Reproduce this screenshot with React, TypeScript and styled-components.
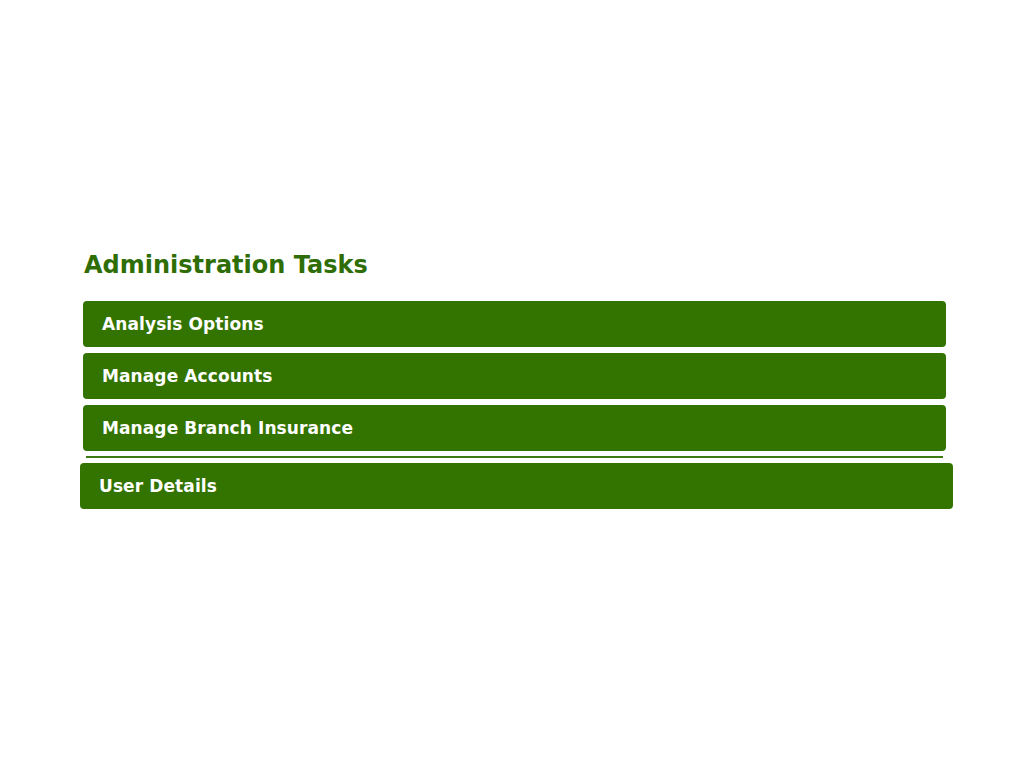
import { FC } from 'react';
import styled, { createGlobalStyle } from 'styled-components';

const GlobalStyle = createGlobalStyle`
  html, body {
    margin: 0;
    padding: 0;
    background: #ffffff;
    font-family: Verdana, "DejaVu Sans", sans-serif;
  }
`;

const Page = styled.div`
  padding: 251px 78px 0 83px;
  width: 863px;
`;

const Title = styled.h2`
  margin: 0 0 22px 1px;
  font-size: 24px;
  line-height: 28px;
  font-weight: bold;
  color: #2f6e06;
`;

const TaskList = styled.div`
  display: flex;
  flex-direction: column;
  gap: 6px;
`;

const TaskButton = styled.a<{ $wide?: boolean }>`
  display: flex;
  align-items: center;
  height: 46px;
  margin: ${({ $wide }) => ($wide ? '0 -7px 0 -3px' : '0')};
  padding-left: 19px;
  border-radius: 4px;
  background-color: #337300;
  color: #ffffff;
  font-size: 17px;
  font-weight: bold;
  letter-spacing: 0.1px;
  text-decoration: none;
  cursor: pointer;
  box-sizing: border-box;
`;

const Divider = styled.hr`
  margin: -1px 3px;
  height: 0;
  border: none;
  border-top: 2px solid #3d7a12;
`;

const tasks = ['Analysis Options', 'Manage Accounts', 'Manage Branch Insurance'];

const App: FC = () => {
  return (
    <>
      <GlobalStyle />
      <Page>
        <Title>Administration Tasks</Title>
        <TaskList>
          {tasks.map((t) => (
            <TaskButton key={t}>{t}</TaskButton>
          ))}
          <Divider />
          <TaskButton $wide>User Details</TaskButton>
        </TaskList>
      </Page>
    </>
  );
};

export default App;
